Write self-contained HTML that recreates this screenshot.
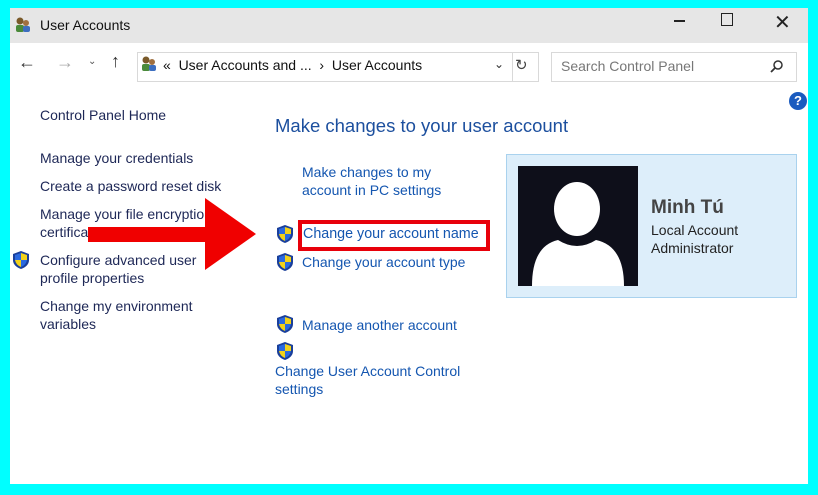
<!DOCTYPE html>
<html><head><meta charset="utf-8"><style>
body{margin:0;width:818px;height:495px;background:#00ffff;position:relative;overflow:hidden;font-family:"Liberation Sans",sans-serif;}
.win{position:absolute;left:10px;top:8px;width:798px;height:476px;background:#fff;}
.title{position:absolute;left:0;top:0;width:798px;height:35px;background:#e6e6e6;}
.a{position:absolute;white-space:nowrap;font-size:14px;}
.l{color:#1d2756;}
.r{color:#1456b0;}
</style></head><body>
<div class="win">
 <div class="title">
  <svg style="position:absolute;left:4px;top:8px" width="18" height="18" viewBox="0 0 18 18"><circle cx="6" cy="5" r="3.5" fill="#7a5a2a"/><rect x="2" y="9" width="8" height="7" rx="2" fill="#4a8a3a"/><circle cx="12" cy="7" r="3" fill="#a07040"/><rect x="9" y="10" width="7" height="6" rx="2" fill="#3c6ec0"/></svg>
  <div class="a" style="left:30px;top:9px;color:#111;">User Accounts</div>
  <div style="position:absolute;left:664px;top:12px;width:11px;height:2px;background:#222"></div>
  <div style="position:absolute;left:711px;top:5px;width:10px;height:11px;border:1.5px solid #222"></div>
  <div class="a" style="left:764px;top:2px;font-size:20px;color:#222">✕</div>
 </div>
 <div class="a" style="left:8px;top:44px;font-size:18px;color:#333">←</div>
 <div class="a" style="left:46px;top:44px;font-size:18px;color:#aaa">→</div>
 <div class="a" style="left:78px;top:48px;font-size:10px;color:#555">⌄</div>
 <div class="a" style="left:101px;top:43px;font-size:18px;color:#333">↑</div>
 <div style="position:absolute;left:127px;top:44px;width:400px;height:28px;border:1px solid #d9d9d9;"></div>
 <svg style="position:absolute;left:130px;top:47px" width="18" height="18" viewBox="0 0 18 18"><circle cx="6" cy="5" r="3.5" fill="#7a5a2a"/><rect x="2" y="9" width="8" height="7" rx="2" fill="#4a8a3a"/><circle cx="12" cy="7" r="3" fill="#a07040"/><rect x="9" y="10" width="7" height="6" rx="2" fill="#3c6ec0"/></svg>
 <div class="a" style="left:153px;top:49px;color:#111">«&nbsp; User Accounts and ... &nbsp;›&nbsp; User Accounts</div>
 <div class="a" style="left:484px;top:49px;font-size:12px;color:#333">⌄</div>
 <div style="position:absolute;left:502px;top:44px;width:1px;height:30px;background:#d9d9d9"></div>
 <div class="a" style="left:505px;top:48px;font-size:15px;color:#444">↻</div>
 <div style="position:absolute;left:541px;top:44px;width:244px;height:28px;border:1px solid #d9d9d9;"></div>
 <div class="a" style="left:551px;top:50px;color:#777">Search Control Panel</div>
 <svg style="position:absolute;left:760px;top:51px" width="14" height="14" viewBox="0 0 14 14"><circle cx="8" cy="6" r="4" fill="none" stroke="#333" stroke-width="1.5"/><line x1="5" y1="9" x2="1" y2="13" stroke="#333" stroke-width="1.8"/></svg>
 <div style="position:absolute;left:779px;top:84px;width:18px;height:18px;border-radius:50%;background:#1a5bbf;color:#fff;font-size:13px;font-weight:bold;text-align:center;line-height:18px">?</div>

 <div class="a l" style="left:30px;top:99px">Control Panel Home</div>
 <div class="a l" style="left:30px;top:142px">Manage your credentials</div>
 <div class="a l" style="left:30px;top:170px">Create a password reset disk</div>
 <div class="a l" style="left:30px;top:198px">Manage your file encryption</div>
 <div class="a l" style="left:30px;top:216px">certificates</div>
 <div class="a l" style="left:30px;top:244px">Configure advanced user</div>
 <div class="a l" style="left:30px;top:262px">profile properties</div>
 <div class="a l" style="left:30px;top:290px">Change my environment</div>
 <div class="a l" style="left:30px;top:308px">variables</div>

 <div class="a" style="left:265px;top:107px;font-size:18.5px;color:#1c4f9e">Make changes to your user account</div>
 <div class="a r" style="left:292px;top:156px">Make changes to my</div>
 <div class="a r" style="left:292px;top:174px">account in PC settings</div>
 <div class="a r" style="left:293px;top:218px;font-size:14.3px">Change your account name</div>
 <div style="position:absolute;left:288px;top:212px;width:192px;height:31px;border:4px solid #e8000a;box-sizing:border-box"></div>
 <div class="a r" style="left:292px;top:246px">Change your account type</div>
 <div class="a r" style="left:292px;top:309px">Manage another account</div>
 <div class="a r" style="left:265px;top:355px">Change User Account Control</div>
 <div class="a r" style="left:265px;top:373px">settings</div>

 <div style="position:absolute;left:496px;top:146px;width:291px;height:144px;background:#ddeefa;border:1px solid #a9d2ee;box-sizing:border-box"></div>
 <svg style="position:absolute;left:508px;top:158px" width="120" height="120" viewBox="0 0 120 120"><rect width="120" height="120" fill="#0e0f1a"/><ellipse cx="59" cy="43" rx="23" ry="27" fill="#fff"/><path d="M14 120 Q14 80 40 74 Q59 86 78 74 Q106 80 106 120 Z" fill="#fff"/></svg>
 <div class="a" style="left:641px;top:189px;font-size:19px;font-weight:bold;color:#444">Minh Tú</div>
 <div class="a" style="left:641px;top:214px;font-size:14px;color:#222">Local Account</div>
 <div class="a" style="left:641px;top:232px;font-size:14px;color:#222">Administrator</div>
</div>
<svg style="position:absolute;left:0;top:0" width="818" height="495">
 <defs><g id="sh"><path d="M8 0 L16 3 L16 9 Q16 15 8 18 Q0 15 0 9 L0 3 Z" fill="#1a3f9a"/><path d="M8 2 L8 9 L2 9 L2 4 Z" fill="#2a6ae0"/><path d="M8 2 L14 4 L14 9 L8 9 Z" fill="#f2d21a"/><path d="M2 9 L8 9 L8 16 Q3 14 2 9 Z" fill="#f2d21a"/><path d="M8 9 L14 9 Q13 14 8 16 Z" fill="#2a6ae0"/></g></defs>
 <use href="#sh" x="13" y="251"/>
 <use href="#sh" x="277" y="225"/>
 <use href="#sh" x="277" y="253"/>
 <use href="#sh" x="277" y="315"/>
 <use href="#sh" x="277" y="342"/>
 <path d="M88 227 L205 227 L205 198 L256 234 L205 270 L205 242 L88 242 Z" fill="#f00000"/>
</svg>
</body></html>
